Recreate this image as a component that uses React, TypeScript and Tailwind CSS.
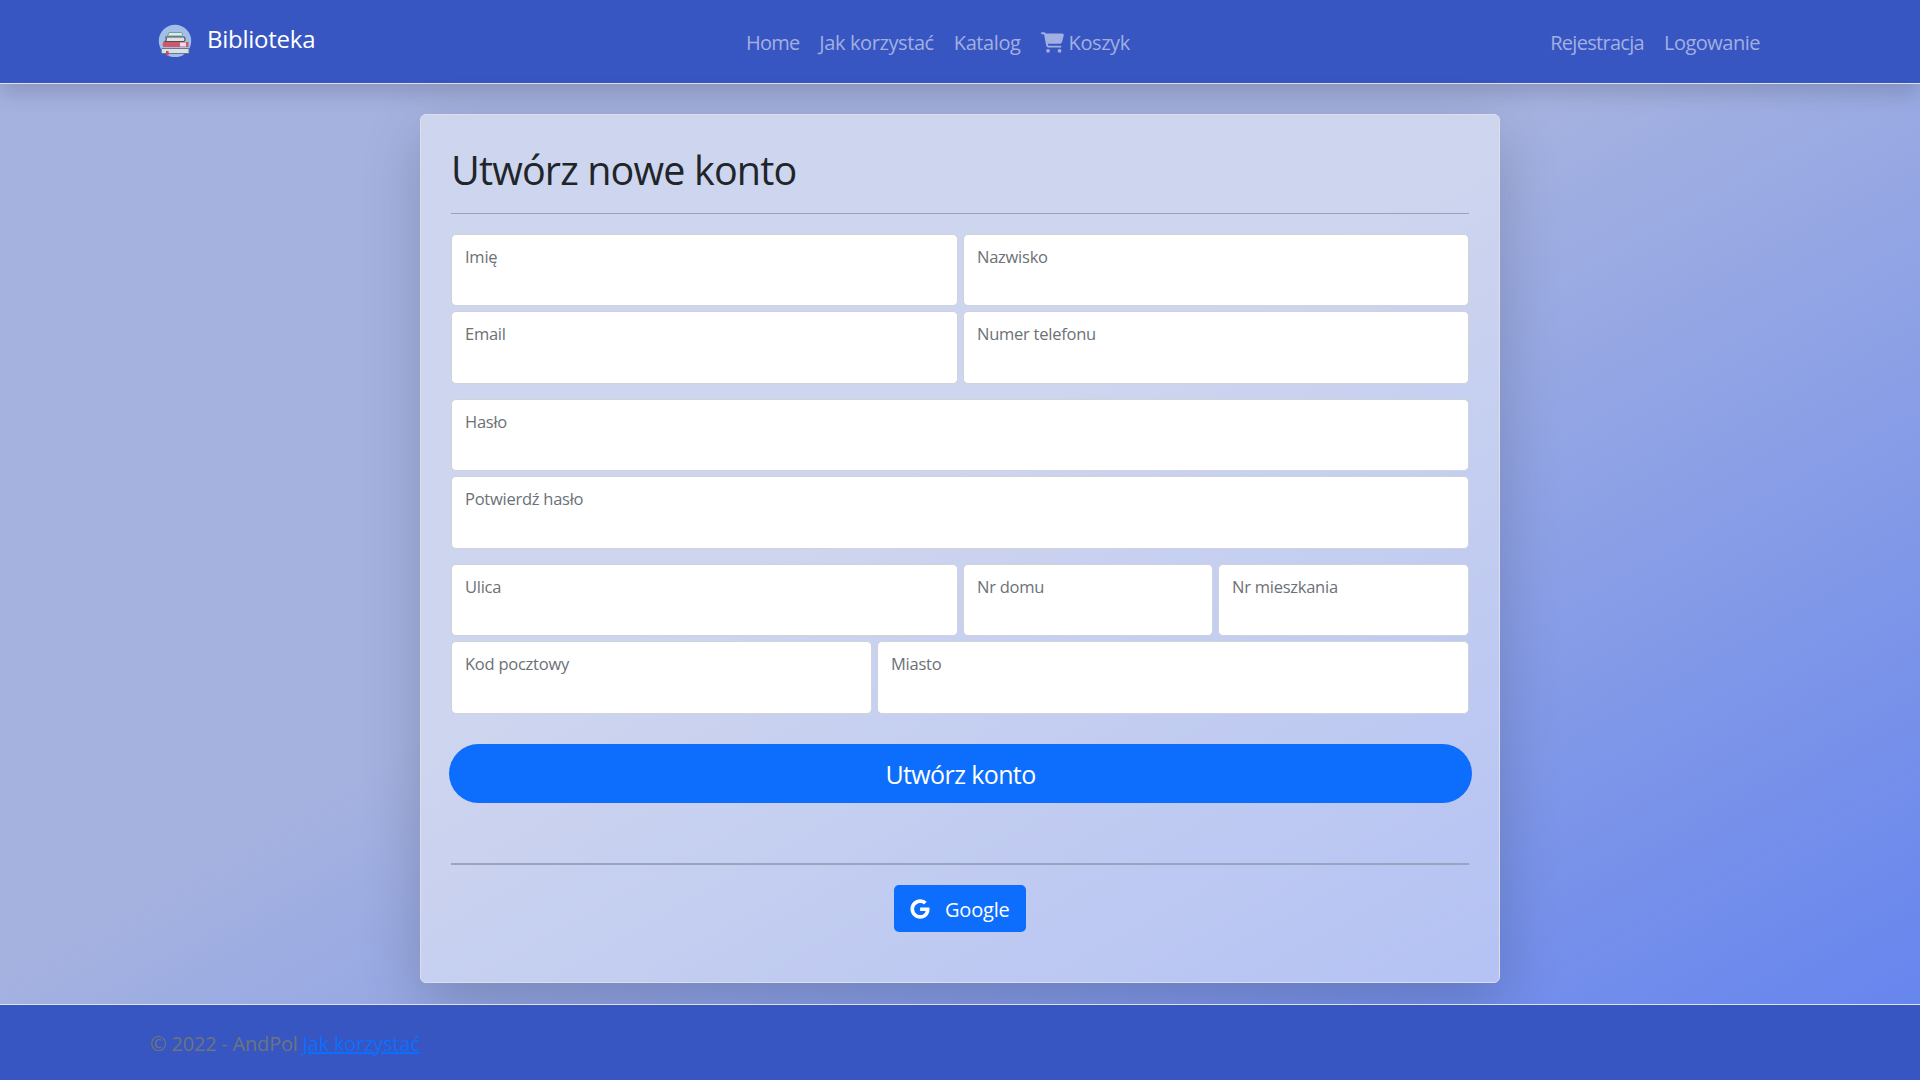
import { FaGoogle } from "react-icons/fa";
import { FaCartShopping } from "react-icons/fa6";

const Field = ({ label, className, h = "h-[72px]" }: { label: string; className: string; h?: string }) => (
  <div className={`${className} ${h} rounded-[5px] border border-[#ced4da] bg-white px-[13px] pt-[10px] text-[16.5px] leading-[24px] tracking-[-0.25px] text-[#6c7176]`}>
    {label}
  </div>
);

const Books = () => (
  <svg width="34" height="34" viewBox="0 0 34 34">
    <circle cx="17" cy="18" r="16.200" fill="#a3bfe6" />
    <path d="M11 9.500h12.500c1 0 1.500 3.500 0 3.500H9.500z" fill="#dfe8ea" stroke="#5f9c9c" strokeWidth=".9" />
    <path d="M8 14h17.500c2 0 2 4.500 0 4.500H7c1.500-1 1.500-3 1-4.500z" fill="#e4e2e0" stroke="#4b4f5c" strokeWidth="1.100" />
    <path d="M5.500 19h25v5h-25c-1.300-1.500-1.300-3.500 0-5z" fill="#d0566a" />
    <path d="M22 19.500h6v4h-6z" fill="#e9dfe2" />
    <path d="M4 25.500h27v5H4c-1-1.500-1-3.500 0-5z" fill="#dcdfe4" stroke="#55708f" strokeWidth=".9" />
    <path d="M8 28h2.600v5l-1.300-1-1.300 1z" fill="#d0465a" />
  </svg>
);

export default function App() {
  return (
    <div className="flex h-[1080px] w-[1920px] flex-col overflow-hidden bg-[linear-gradient(to_bottom_right,#a5b2e0_0%,#a5b2e0_45%,#6282ef_100%)] font-['Open_Sans',sans-serif] text-[#212529]">
      <header className="h-[84px] shrink-0 border-b border-[#dee2e6] bg-[#3756c1] shadow-[0_10px_20px_rgba(0,0,0,0.15)]">
        <div className="mx-auto flex h-full w-[1620px] justify-between pr-[10px] pl-[8px] text-[20px] text-[#a2afe2]">
          <a className="flex w-[588px] pt-[23px] text-[24px] leading-[32px] tracking-[-0.25px] text-white">
            <Books />
            <span className="ml-[15px]">Biblioteka</span>
          </a>
          <nav className="flex flex-1 gap-[20px] pt-[29px] leading-[28px] tracking-[-0.4px]">
            <a className="tracking-[-0.8px]">Home</a>
            <a>Jak korzystać</a>
            <a>Katalog</a>
            <a className="flex"><FaCartShopping className="mt-[3px] mr-[5px] h-[21px] w-[23px]" />Koszyk</a>
          </nav>
          <nav className="flex gap-[20px] pt-[29px] leading-[28px]">
            <a className="tracking-[-0.7px]">Rejestracja</a>
            <a className="tracking-[-0.5px]">Logowanie</a>
          </nav>
        </div>
      </header>
      <main className="flex-1 pt-[30px]">
        <section className="mx-auto h-[869px] w-[1080px] rounded-md border border-[#dcdfe4] bg-white/46 px-[30px] shadow-[0_20px_60px_rgba(0,0,0,0.19)]">
          <h1 className="pt-[30px] text-[39.5px] leading-[50px] tracking-[-0.85px]">Utwórz nowe konto</h1>
          <hr className="mt-[18px] border-[#9aa2b8]" />
          <div className="mt-[20px] flex flex-col gap-[5px]">
            <div className="flex gap-[5px]"><Field label="Imię" className="w-[507px]" /><Field label="Nazwisko" className="flex-1" /></div>
            <div className="flex gap-[5px]"><Field label="Email" className="w-[507px]" h="h-[73px]" /><Field label="Numer telefonu" className="flex-1" h="h-[73px]" /></div>
            <div className="mt-[10px] flex"><Field label="Hasło" className="flex-1" /></div>
            <div className="flex"><Field label="Potwierdź hasło" className="flex-1" h="h-[73px]" /></div>
            <div className="mt-[10px] flex gap-[5px]"><Field label="Ulica" className="w-[507px]" /><Field label="Nr domu" className="w-[250px]" /><Field label="Nr mieszkania" className="flex-1" /></div>
            <div className="flex gap-[5px]"><Field label="Kod pocztowy" className="w-[421px]" h="h-[73px]" /><Field label="Miasto" className="flex-1" h="h-[73px]" /></div>
          </div>
          <button className="-mx-[2px] mt-[30px] flex h-[59px] w-[1023px] items-center justify-center rounded-full bg-[#0d6efd] pt-[2px] text-[25px] tracking-[-0.6px] text-white">Utwórz konto</button>
          <hr className="mt-[60px] border-t-2 border-[#9aa3c0]" />
          <button className="mx-auto mt-[20px] flex h-[47px] w-[132px] items-center rounded-[5px] bg-[#0d6efd] pt-[2px] pl-[16px] text-[20px] tracking-[-0.2px] text-white">
            <FaGoogle className="mr-[15px] mb-px h-[20px] w-[20px]" />Google
          </button>
        </section>
      </main>
      <footer className="h-[76px] shrink-0 border-t border-[#dee2e6] bg-[#3756c1]">
        <div className="mx-auto w-[1620px] pt-[25px] text-[20px] leading-[28px] tracking-[-0.2px] text-[#6c757d]">
          © 2022 - AndPol <a className="text-[#0d6efd] underline">Jak korzystać</a>
        </div>
      </footer>
    </div>
  );
}
